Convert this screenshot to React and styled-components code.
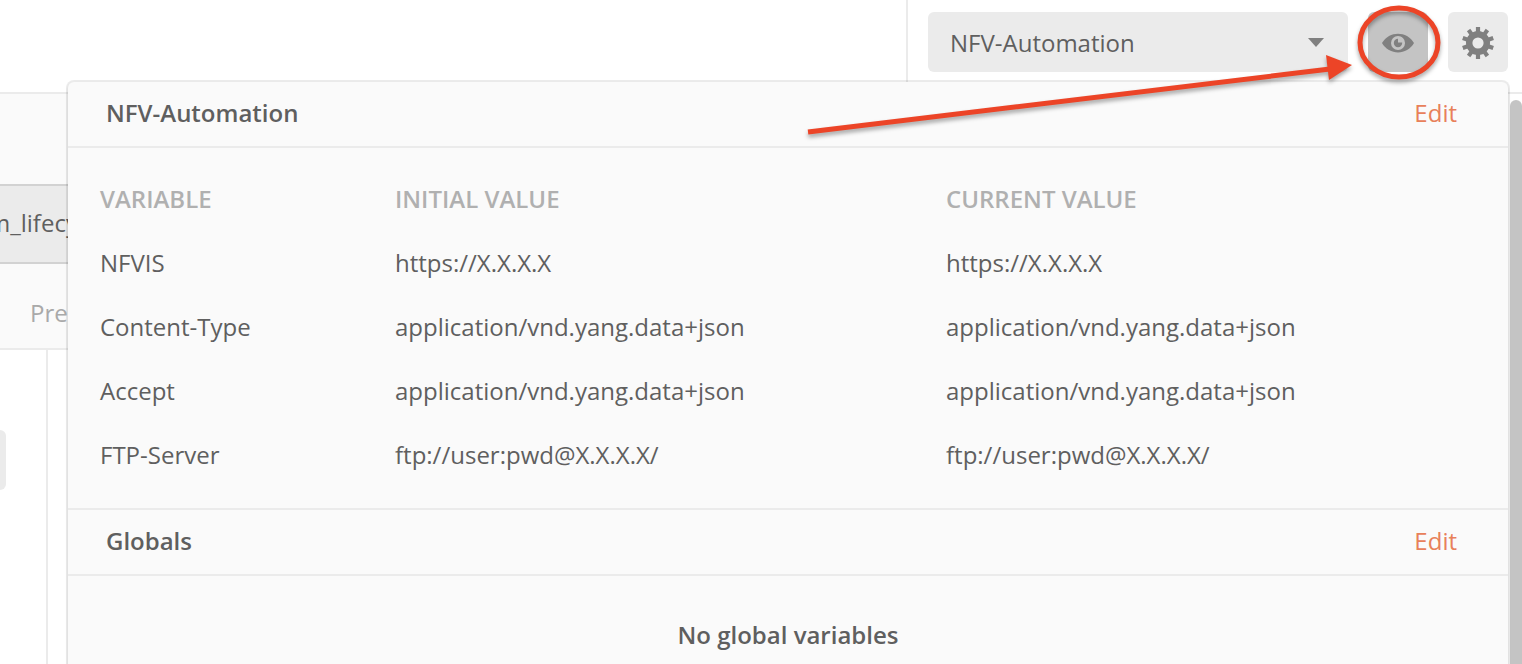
import React from 'react';
import styled, { createGlobalStyle } from 'styled-components';

const Global = createGlobalStyle`
  * { box-sizing: border-box; }
  body { margin: 0; background: #fff; overflow: hidden; }
`;

const Page = styled.div`
  position: relative;
  width: 1522px;
  height: 664px;
  overflow: hidden;
  background: #fff;
  color: #5f5f5f;
  font: 400 24px/32px 'Open Sans', 'Liberation Sans', sans-serif;
  white-space: nowrap;
`;

const TopBar = styled.header`
  display: flex;
  justify-content: flex-end;
  height: 94px;
  border-bottom: 2px solid #ebebeb;
`;

const EnvironmentBar = styled.div`
  display: flex;
  gap: 20px;
  padding: 12px 14px 0 20px;
  border-left: 2px solid #ebebeb;
`;

const EnvironmentSelect = styled.div`
  display: flex;
  align-items: center;
  justify-content: space-between;
  width: 420px;
  height: 60px;
  padding: 1px 24px 0 22px;
  border-radius: 6px;
  background: #ebebeb;
`;

const Caret = styled.span`
  border: 8px solid transparent;
  border-top: 9px solid #808080;
  border-bottom: 0;
`;

const IconButton = styled.div`
  display: flex;
  align-items: center;
  justify-content: center;
  width: 60px;
  height: 60px;
  padding-top: 1px;
  border-radius: 6px;
  background: ${(p) => (p.$active ? '#c4c4c4' : '#ebebeb')};
`;

const Workspace = styled.main`
  display: flex;
  flex-direction: column;
  height: 570px;
  padding-right: 14px;
`;

const TabStrip = styled.div`
  height: 90px;
  background: #fafafa;
`;

const RequestTab = styled.div`
  height: 80px;
  padding-top: 21px;
  border-top: 2px solid #d2d2d2;
  border-bottom: 2px solid #d2d2d2;
  background: #ebebeb;
  overflow: hidden;
`;

const TabName = styled.div`
  margin-left: -12px;
`;

const SectionTabs = styled.div`
  height: 86px;
  padding: 33px 0 0 30px;
  border-bottom: 2px solid #ebebeb;
  background: #fafafa;
  color: #a9a9a9;
`;

const Editor = styled.div`
  flex: 1;
  display: flex;
`;

const EditorGutter = styled.div`
  width: 48px;
  padding-top: 80px;
  border-right: 2px solid #ebebeb;
`;

const GutterButton = styled.div`
  width: 6px;
  height: 60px;
  border-radius: 0 6px 6px 0;
  background: #ebebeb;
`;

const ScrollThumb = styled.div`
  position: absolute;
  left: 1510px;
  top: 100px;
  width: 12px;
  height: 580px;
  border-radius: 6px;
  background: #c4c4c4;
`;

const Popover = styled.section`
  position: absolute;
  left: 68px;
  top: 82px;
  width: 1440px;
  height: 600px;
  border-radius: 6px 6px 0 0;
  background: #fafafa;
  box-shadow: 0 0 0 2px rgba(0, 0, 0, 0.08), 0 2px 3px rgba(0, 0, 0, 0.1);
`;

const PopoverHeader = styled.div`
  display: flex;
  align-items: center;
  justify-content: space-between;
  height: ${(p) => (p.$divided ? 68 : 66)}px;
  padding: 0 51px 2px 38px;
  border-top: ${(p) => (p.$divided ? '2px solid #ebebeb' : '0')};
  border-bottom: 2px solid #ebebeb;
`;

const Title = styled.span`
  font-weight: 600;
`;

const EditLink = styled.a`
  color: #e8805a;
`;

const Table = styled.div`
  display: flex;
  flex-direction: column;
  height: 360px;
  padding: 19px 32px 0;
`;

const Row = styled.div`
  display: grid;
  grid-template-columns: 295px 551px 1fr;
  align-items: center;
  height: 64px;
  font-weight: ${(p) => (p.$head ? 600 : 400)};
  color: ${(p) => (p.$head ? '#b0b0b0' : 'inherit')};
`;

const Cell = styled.span``;

const EmptyMessage = styled.div`
  padding-top: 43px;
  text-align: center;
  font-weight: 600;
`;

const Annotation = styled.svg`
  position: absolute;
  left: 0;
  top: 0;
  filter: drop-shadow(0 3px 2px rgba(0, 0, 0, 0.35));
`;

const EyeIcon = () => (
  <svg width="32" height="20" viewBox="0 0 32 20">
    <path d="M0 10C7-2.500 25-2.500 32 10C25 22.500 7 22.500 0 10Z" fill="#808080" />
    <circle cx="16" cy="10" r="7" fill="#c4c4c4" />
    <circle cx="16" cy="10" r="4.200" fill="#808080" />
    <path d="M16 4.500H20V9.500H16Z" fill="#c4c4c4" />
  </svg>
);

const GearIcon = () => (
  <svg width="32" height="32" viewBox="-16 -16 32 32">
    <circle r="8.800" fill="none" stroke="#808080" strokeWidth="6.400" />
    {Array.from({ length: 10 }, (_, i) => (
      <rect key={i} x="-2.100" y="-16" width="4.200" height="6" fill="#808080" transform={`rotate(${i * 36})`} />
    ))}
  </svg>
);

const variables = [
  ['NFVIS', 'https://X.X.X.X'],
  ['Content-Type', 'application/vnd.yang.data+json'],
  ['Accept', 'application/vnd.yang.data+json'],
  ['FTP-Server', 'ftp://user:pwd@X.X.X.X/'],
];

export default function App() {
  return (
    <Page>
      <Global />
      <TopBar>
        <EnvironmentBar>
          <EnvironmentSelect>NFV-Automation<Caret /></EnvironmentSelect>
          <IconButton $active><EyeIcon /></IconButton>
          <IconButton><GearIcon /></IconButton>
        </EnvironmentBar>
      </TopBar>
      <Workspace>
        <TabStrip />
        <RequestTab><TabName>m_lifecy</TabName></RequestTab>
        <SectionTabs>Pre</SectionTabs>
        <Editor><EditorGutter><GutterButton /></EditorGutter></Editor>
      </Workspace>
      <ScrollThumb />
      <Popover>
        <PopoverHeader><Title>NFV-Automation</Title><EditLink>Edit</EditLink></PopoverHeader>
        <Table>
          <Row $head><Cell>VARIABLE</Cell><Cell>INITIAL VALUE</Cell><Cell>CURRENT VALUE</Cell></Row>
          {variables.map(([name, value]) => (
            <Row key={name}><Cell>{name}</Cell><Cell>{value}</Cell><Cell>{value}</Cell></Row>
          ))}
        </Table>
        <PopoverHeader $divided><Title>Globals</Title><EditLink>Edit</EditLink></PopoverHeader>
        <EmptyMessage>No global variables</EmptyMessage>
      </Popover>
      <Annotation width="1522" height="664" viewBox="0 0 1522 664">
        <ellipse cx="1399" cy="42.500" rx="39" ry="34.500" fill="none" stroke="#ec4427" strokeWidth="5" />
        <path d="M808 132L1330 69" stroke="#ec4427" strokeWidth="5" />
        <path d="M1326 55L1352 65L1329 80Z" fill="#ec4427" />
      </Annotation>
    </Page>
  );
}
